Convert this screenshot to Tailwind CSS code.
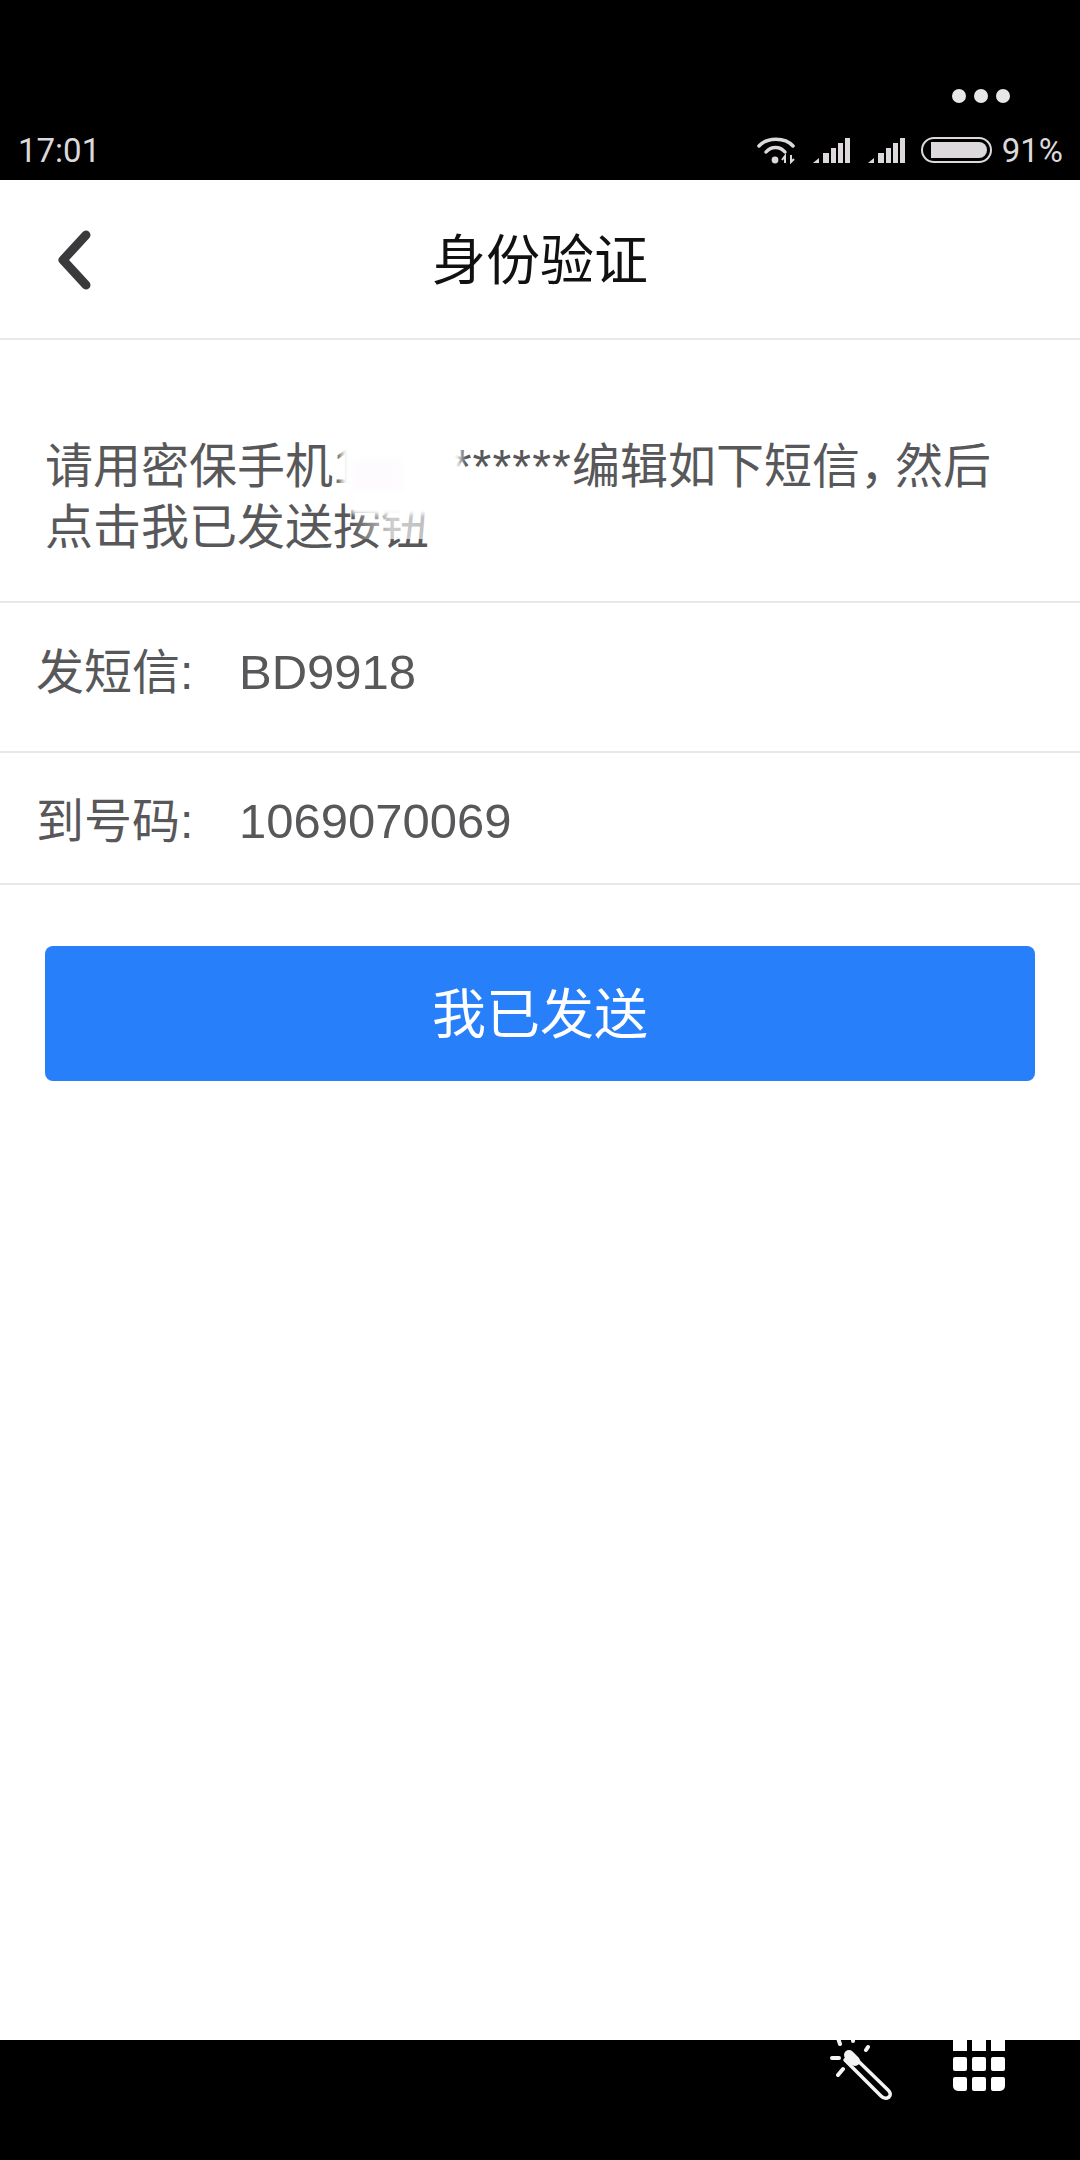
<!DOCTYPE html>
<html lang="zh-CN">
<head>
    <meta charset="UTF-8">
    <title>身份验证</title>
    <script src="https://cdn.jsdelivr.net/npm/@tailwindcss/browser@4"></script>
</head>
<body class="bg-white font-['Liberation_Sans','Noto_Sans_CJK_SC',sans-serif]">
    <div class="w-[1080px] h-[2160px] flex flex-col overflow-hidden">
        <!-- status bar -->
        <div class="h-[180px] bg-black shrink-0 flex flex-col justify-end pb-[16px]">
            <div class="flex justify-end gap-[8px] pr-[70px] pb-[33px]">
                <span class="w-[14px] h-[14px] rounded-full bg-[#e8e6e8]"></span>
                <span class="w-[14px] h-[14px] rounded-full bg-[#e8e6e8]"></span>
                <span class="w-[14px] h-[14px] rounded-full bg-[#e8e6e8]"></span>
            </div>
            <div class="flex items-end justify-between pl-[18px] pr-[17px] h-[28px] text-[#dcd8dc] font-['Roboto',sans-serif]">
                <span class="text-[33px] leading-[26px]">17:01</span>
                <div class="flex items-end">
                    <svg width="40" height="28" viewBox="0 0 40 28" class="mr-[16px]" fill="none" stroke="#dcd8dc" stroke-linecap="round">
                        <path d="M2 10 C10 1 28 1 36 10" stroke-width="3.5"/>
                        <path d="M9 16 C14 10 23 10 28 16" stroke-width="3.5"/>
                        <circle cx="18" cy="24" r="3.4" fill="#dcd8dc" stroke="none"/>
                        <path d="M28 27v-7l-3 4M34 19v7l3-3" stroke-width="2" stroke-linecap="butt"/>
                    </svg>
                    <svg width="38" height="25" viewBox="0 0 38 25" class="mr-[17px] mb-[1px]" fill="#dcd8dc">
                        <path d="M0 25 L6 20 V25Z"/><rect x="10" y="15" width="6" height="10"/><rect x="18" y="10" width="5" height="15"/><rect x="25" y="5" width="5" height="20"/><rect x="32" y="0" width="5" height="25"/>
                    </svg>
                    <svg width="38" height="25" viewBox="0 0 38 25" class="mr-[15px] mb-[1px]" fill="#dcd8dc">
                        <path d="M0 25 L6 20 V25Z"/><rect x="10" y="15" width="6" height="10"/><rect x="18" y="10" width="5" height="15"/><rect x="25" y="5" width="5" height="20"/><rect x="32" y="0" width="5" height="25"/>
                    </svg>
                    <div class="w-[71px] h-[26px] rounded-full border-2 border-[#dcd8dc] pl-[8px] pr-[3px] py-[3px] mr-[10px] mb-[1px]">
                        <div class="h-full rounded-r-full bg-[#dcd8dc]"></div>
                    </div>
                    <span class="text-[33px] leading-[26px]">91%</span>
                </div>
            </div>
        </div>

        <!-- header -->
        <div class="relative h-[160px] shrink-0 flex items-center justify-center border-b-2 border-[#e8e8e8] pt-[5px]">
            <svg width="50" height="70" viewBox="0 0 50 70" class="absolute left-[50px] top-[45px]" fill="none" stroke="#3a3a3c" stroke-width="9" stroke-linecap="round" stroke-linejoin="round">
                <path d="M36 10 L13 35 L36 60"/>
            </svg>
            <h1 class="text-[54px] text-[#111111] font-normal">身份验证</h1>
        </div>

        <!-- message -->
        <div class="relative h-[263px] shrink-0 border-b-2 border-[#e8e8e8] pt-[96px] pl-[45px] text-[48px] leading-[61px] text-[#58585a]">
            <p>请用密保手机1<span class="inline-block w-[93px]"></span><span class="tracking-[1.2px]">******</span>编辑如下短信<span class="tracking-[-13px]">，</span>然后<br>点击我已发送按钮</p>
            <!-- smudge over the phone number -->
            <div class="absolute left-[341px] top-[70px] w-[120px] h-[80px] bg-white blur-[3px]"></div>
            <div class="absolute left-[352px] top-[120px] w-[50px] h-[50px] bg-[#fdfbfe] blur-[2px]"></div>
            <div class="absolute left-[352px] top-[150px] w-[80px] h-[24px] bg-white blur-[2px]"></div>
            <div class="absolute left-[352px] top-[165px] w-[80px] h-[34px] bg-gradient-to-r from-white/0 via-white/70 to-white/60"></div>
        </div>

        <!-- rows -->
        <div class="h-[150px] shrink-0 flex items-center pl-[36px] pb-[9px] border-b-2 border-[#e8e8e8] text-[48px] text-[#58585a]">
            <span class="w-[203px]">发短信:</span><span class="text-[49px]">BD9918</span>
        </div>
        <div class="h-[132px] shrink-0 flex items-center pl-[36px] pt-[7px] border-b-2 border-[#e8e8e8] text-[48px] text-[#58585a]">
            <span class="w-[203px]">到号码:</span><span class="text-[49px]">1069070069</span>
        </div>

        <!-- button -->
        <div class="px-[45px] pt-[61px] flex-1">
            <button class="w-full h-[135px] rounded-[8px] bg-[#277ffa] text-white text-[54px] pt-[4px]">我已发送</button>
        </div>

        <!-- bottom bar, icons cut off by the page above -->
        <div class="h-[120px] shrink-0 bg-black relative overflow-hidden">
            <svg width="80" height="66" viewBox="0 0 80 66" class="absolute left-[820px] top-0" fill="none" stroke="#f4f4f4" stroke-linecap="round" stroke-linejoin="round">
                <path d="M31 14 L68 50 Q72 54 69 57 Q65 60 61 56 L25 20Z" stroke-width="3.5"/>
                <path d="M29 15 L35 21" stroke-width="10"/>
                <path d="M18 -2l2 6M33 -2v3M48 7l-2 3M12 18h7M18 35l5-6" stroke-width="4"/>
            </svg>
            <div class="absolute left-[953px] top-0 grid grid-cols-3 gap-x-[5px] gap-y-[6px]">
                <span class="w-[14px] h-[11px] bg-white"></span>
                <span class="w-[14px] h-[11px] bg-white"></span>
                <span class="w-[14px] h-[11px] bg-white"></span>
                <span class="w-[14px] h-[14px] bg-white rounded-[2px]"></span>
                <span class="w-[14px] h-[14px] bg-white rounded-[2px]"></span>
                <span class="w-[14px] h-[14px] bg-white rounded-[2px]"></span>
                <span class="w-[14px] h-[14px] bg-white rounded-[2px] rounded-bl-[5px]"></span>
                <span class="w-[14px] h-[14px] bg-white rounded-[2px]"></span>
                <span class="w-[14px] h-[14px] bg-white rounded-[2px] rounded-br-[5px]"></span>
            </div>
        </div>
    </div>
</body>
</html>
